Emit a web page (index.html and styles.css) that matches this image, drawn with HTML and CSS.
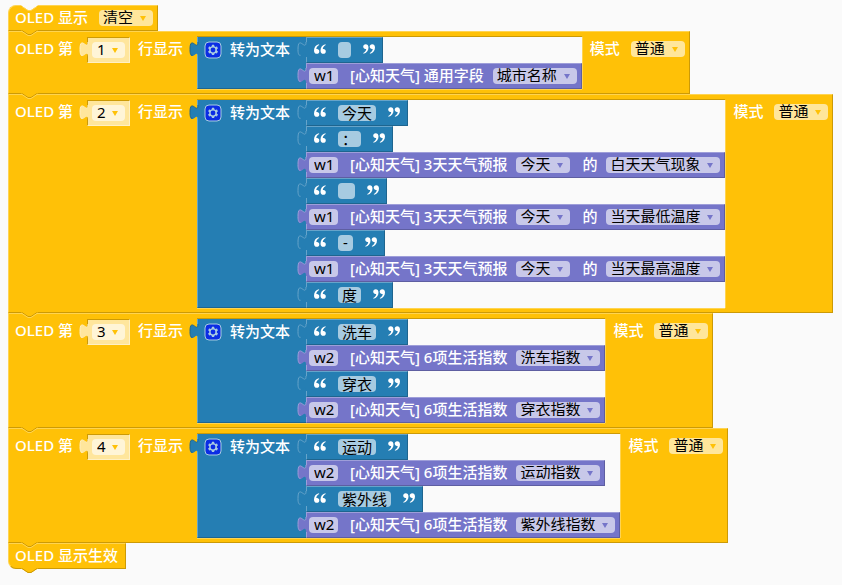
FILE: index.html
```
<!DOCTYPE html>
<html lang="zh-CN">
<head>
<meta charset="utf-8">
<title>OLED 天气显示</title>
<link rel="stylesheet" href="styles.css">
</head>
<body>
<svg class="defs" aria-hidden="true">
  <symbol id="tab" viewBox="0 0 10 26"><path class="tab-fill" d="M10,5H9c0,10 -8,-8 -8,7.5s8,-2.5 8,7.5h1z"/><path class="tab-line" d="M9,5c0,10 -8,-8 -8,7.5c0,5 1,6 2.5,5.8"/></symbol>
  <symbol id="bump" viewBox="0 0 17 6"><path class="bump-fill" d="M0,0H17L16,1L10,5H7L1,1z"/><path class="bump-dark" d="M1,.5L7,4.500H10L16,.5"/><path class="bump-light" d="M1,1.500L7,5.500H10L16,1.500"/></symbol>
  <symbol id="gear" viewBox="0 0 18 18"><g transform="translate(1 1)"><rect class="gear-box" x="0" y="0" width="16" height="16" rx="4"/><path class="gear-wheel" d="m4.203,7.296 0,1.368 -0.92,0.677 -0.11,0.41 0.9,1.59 0.41,0.11 1.043,-0.457 1.187,0.683 0.127,1.134 0.3,0.3 1.8,0 0.3,-0.299 0.127,-1.138 1.185,-0.682 1.046,0.458 0.409,-0.11 0.9,-1.59 -0.11,-0.41 -0.92,-0.677 0,-1.366 0.92,-0.677 0.11,-0.41 -0.9,-1.59 -0.409,-0.109 -1.046,0.458 -1.185,-0.682 -0.127,-1.138 -0.3,-0.299 -1.8,0 -0.3,0.3 -0.126,1.135 -1.187,0.682 -1.043,-0.457 -0.41,0.11 -0.899,1.59z"/><circle class="gear-hole" cx="8" cy="8" r="2.400"/></g></symbol>
  <symbol id="quote-open" viewBox="0 0 12 10"><path d="M5,.2C2,.8 0,3.200 0,6.400C0,8.600 1.100,9.800 2.800,9.800C4.300,9.800 5.300,8.800 5.300,7.400C5.300,6 4.300,5.100 3,5.100H2.300C2.400,3.400 3.400,1.900 5.200,1zM11.500,.2C8.500,.8 6.500,3.200 6.500,6.400C6.500,8.600 7.600,9.800 9.300,9.800C10.800,9.800 11.800,8.800 11.800,7.400C11.800,6 10.800,5.100 9.500,5.100H8.800C8.900,3.400 9.900,1.900 11.700,1z"/></symbol>
  <symbol id="quote-close" viewBox="0 0 12 10"><use href="#quote-open" width="12" height="10" transform="rotate(180 6 5)"/></symbol>
</svg>

<main class="stack" id="stack"></main>
<script src="blocks.js"></script>
</body>
</html>
```
FILE: blocks.js
```
const icon = (name, cls) => `<svg class="${cls}" aria-hidden="true"><use href="#${name}"/></svg>`;
const label = text => `<span class="label">${text}</span>`;
const select = (name, value) =>
  `<span class="pick"><select aria-label="${name}"><option>${value}</option></select></span>`;

const textRow = (value, size) =>
  `<div class="row text">${icon('tab', 'tab')}${icon('quote-open', 'quote')}<input class="field ${size}" type="text" aria-label="文本" value="${value}">${icon('quote-close', 'quote')}</div>`;

const weatherRow = (device, title, ...parts) =>
  `<div class="row weather">${icon('tab', 'tab')}<input class="field device" type="text" aria-label="变量" value="${device}">${label('[心知天气] ' + title)}${parts.join('')}</div>`;

const forecast = what => weatherRow('w1', '3天天气预报', select('日期', '今天'), label('的'), select('字段', what));
const index = what => weatherRow('w2', '6项生活指数', select('指数', what));

const line = (n, rows) => `
<section class="block line">
  <div class="head">
    ${label('OLED 第')}
    <span class="number">${icon('tab', 'tab')}${select('行', n)}</span>
    ${label('行显示')}
  </div>
  <div class="join">
    <div class="join-head">${icon('tab', 'tab')}<button type="button" class="gear" aria-label="设置">${icon('gear', 'gear-icon')}</button>${label('转为文本')}</div>
    <div class="rows">${rows.join('')}</div>
  </div>
  <div class="mode">${label('模式')}${select('模式', '普通')}</div>
  ${icon('bump', 'bump')}
</section>`;

document.getElementById('stack').innerHTML = [
  `<section class="block first">${icon('bump', 'notch')}${label('OLED 显示')}${select('显示', '清空')}${icon('bump', 'bump')}</section>`,
  line('1', [textRow(' ', 'space'), weatherRow('w1', '通用字段', select('字段', '城市名称'))]),
  line('2', [
    textRow('今天', 'two'), textRow('：', 'one'), forecast('白天天气现象'),
    textRow('  ', 'spaces'), forecast('当天最低温度'),
    textRow('-', 'dash'), forecast('当天最高温度'), textRow('度', 'one')
  ]),
  line('3', [textRow('洗车', 'two'), index('洗车指数'), textRow('穿衣', 'two'), index('穿衣指数')]),
  line('4', [textRow('运动', 'two'), index('运动指数'), textRow('紫外线', 'three'), index('紫外线指数')]),
  `<section class="block last">${label('OLED 显示生效')}${icon('bump', 'bump')}</section>`
].join('');
```
FILE: styles.css
```
:root {
  --bg: #fafafa;
  --yellow: #ffc107;
  --yellow-light: #ffd451;
  --yellow-dark: #cc9a06;
  --blue: #257eb3;
  --blue-light: #66a4ca;
  --blue-dark: #1e658f;
  --purple: #7575c9;
  --purple-light: #9e9ed9;
  --purple-dark: #5e5ea1;
}
* { box-sizing: border-box; }
body {
  margin: 0;
  padding: 5px 8px;
  background: var(--bg);
  color: #fff;
  font: 15px/16px "Noto Sans", "Noto Sans CJK SC", sans-serif;
}
.defs { position: absolute; width: 0; height: 0; }
svg { display: block; }
.stack {
  display: flex;
  flex-direction: column;
  align-items: flex-start;
}
.block {
  --accent: var(--yellow);
  position: relative;
  display: flex;
  background: var(--yellow);
  border: 1px solid var(--yellow-dark);
  border-top-color: var(--yellow-light);
  border-left-color: var(--yellow-light);
}
.label {
  flex: none;
  font-weight: 500;
  line-height: 14px;
  white-space: nowrap;
}

/* rounded value fields */
.pick { position: relative; display: inline-flex; flex: none; }
.pick::after {
  content: "";
  position: absolute;
  right: 7px;
  top: 6px;
  border: solid transparent;
  border-width: 5px 3px 0;
  border-top-color: var(--accent);
  pointer-events: none;
}
select, .field {
  appearance: none;
  height: 16px;
  margin: 0;
  padding: 0 4px 2px;
  border: 0;
  border-radius: 4px;
  background: rgb(255 255 255 / .6);
  color: #000;
  font: inherit;
  line-height: 14px;
}
select { padding-right: 19px; }
.field { flex: none; }
.device { width: 29px; padding-left: 5px; padding-right: 3px; }
.space { width: 13px; }
.spaces { width: 17px; }
.dash { width: 15px; padding-left: 5px; }
.one { width: 23px; }
.two { width: 38px; }
.three { width: 53px; }

/* simple statements */
.first {
  gap: 11px;
  height: 26px;
  padding: 4px 4px 4px 6px;
  border-top-left-radius: 8px;
}
.last {
  height: 26px;
  padding: 4px 7px 4px 6px;
  border-bottom-left-radius: 8px;
}
.bump, .notch {
  position: absolute;
  left: 12px;
  width: 17px;
  height: 6px;
  z-index: 1;
}
.bump { top: 100%; }
.notch { top: -1px; }
.bump-fill { fill: var(--yellow); }
.bump-dark { fill: none; stroke: var(--yellow-dark); }
.bump-light { fill: none; stroke: var(--yellow-light); }
.notch { --yellow: var(--bg); --yellow-dark: var(--bg); }
.last .bump { --yellow-light: transparent; }

/* display-line statements */
.line { padding: 5px 4px 4px 6px; }
.head { display: flex; align-items: flex-start; }
.head > .label, .mode { margin-top: 4px; }
.number {
  --tab: #ffe69c;
  --tab-light: #fff0c4;
  position: relative;
  display: flex;
  height: 26px;
  margin: 0 8px 0 14px;
  padding: 4px;
  background: var(--tab);
  border: 1px solid #fff0c4;
  border-top-color: var(--yellow-dark);
  border-left-color: var(--yellow-dark);
}
.number select { width: 33px; padding-left: 5px; }
.tab {
  position: absolute;
  left: -9px;
  top: 0;
  width: 10px;
  height: 26px;
}
.number .tab { top: -1px; }
.tab-fill { fill: var(--tab); }
.tab-line { fill: none; stroke: var(--tab-light); }

.join {
  display: flex;
  margin-left: 14px;
  background: var(--bg);
  box-shadow: 0 -1px var(--yellow-dark), 1px 0 var(--yellow-light), 0 1px var(--yellow-light);
}
.join-head {
  --tab: var(--blue);
  --tab-light: var(--blue-dark);
  position: relative;
  display: flex;
  align-items: flex-start;
  gap: 9px;
  padding: 5px 16px 0 7px;
  background: var(--blue);
  border-left: 1px solid var(--blue-light);
  border-bottom: 1px solid var(--blue-dark);
}
.gear { padding: 0; border: 0; background: none; }
.gear-icon { width: 18px; height: 18px; margin: -1px; }
.gear-box { fill: #0b2de4; stroke: #a8cbe1; }
.gear-wheel { fill: #a8cbe1; }
.gear-hole { fill: #0b2de4; }

.rows {
  display: flex;
  flex-direction: column;
  align-items: flex-start;
}
.row {
  position: relative;
  display: flex;
  height: 26px;
  border: 1px solid;
}
.text {
  --tab: var(--blue);
  --tab-light: var(--blue-light);
  gap: 12px;
  padding: 4px 7px 0;
  background: var(--blue);
  border-color: var(--blue-light) var(--blue-dark) var(--blue-dark) var(--blue-light);
}
.weather {
  --tab: var(--purple);
  --tab-light: var(--purple-light);
  --accent: var(--purple);
  padding: 4px 4px 0 2px;
  background: var(--purple);
  border-color: var(--purple-light) var(--purple-dark) var(--purple-dark) var(--purple-light);
}
.row .tab { top: -1px; left: -10px; }
.weather .label { margin: 0 9px 0 12px; }
.quote { width: 12px; height: 10px; fill: #fff; margin-top: 2px; }
.mode { display: flex; gap: 11px; margin-left: 8px; }
```
